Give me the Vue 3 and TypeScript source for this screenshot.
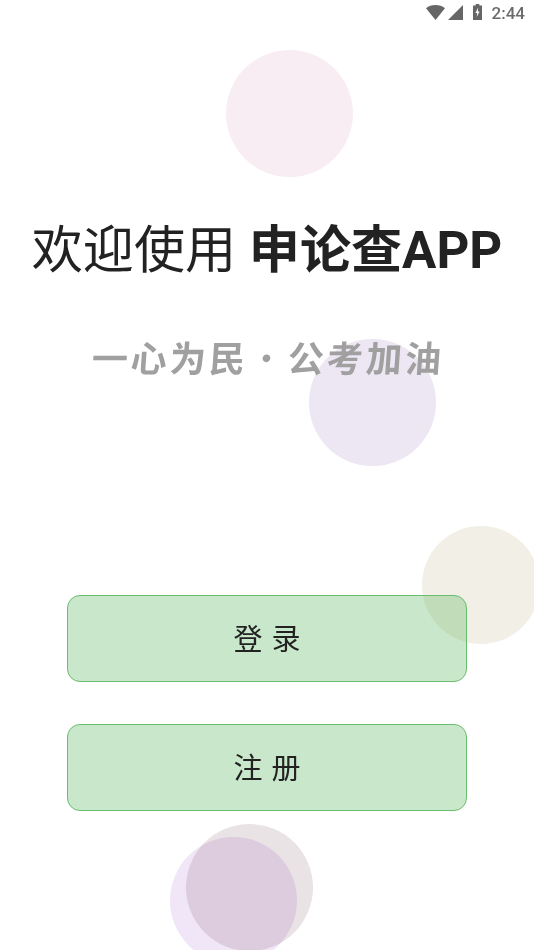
<script setup lang="ts">
interface Bubble { cls: string }
const bubbles: Bubble[] = [
  { cls: 'pink' },
  { cls: 'lilac' },
  { cls: 'sand' },
  { cls: 'violet' },
  { cls: 'mauve' },
]
const actions: string[] = ['登录', '注册']
</script>

<template>
  <div class="screen">
    <span v-for="b in bubbles" :key="b.cls" class="bubble" :class="b.cls"></span>

    <header class="status">
      <svg class="wifi" viewBox="0 0 19 15" width="19" height="15" aria-hidden="true">
        <path d="M0 3.2C2.6 1.1 5.9 0 9.5 0s6.9 1.1 9.5 3.2L9.5 15z" fill="#666" />
      </svg>
      <svg class="signal" viewBox="0 0 15 15" width="15" height="15" aria-hidden="true">
        <path d="M15 0v15H0z" fill="#666" />
      </svg>
      <svg class="battery" viewBox="0 0 9 16" width="9" height="16" aria-hidden="true">
        <path d="M2.7 0h3.6v1.6H9V16H0V1.6h2.7z" fill="#666" />
        <path d="M5.2 3.5 2.4 9h1.8l-.5 4 2.9-5.6H4.8z" fill="#fff" />
      </svg>
      <span class="time">2:44</span>
    </header>

    <main class="content">
      <h1 class="title">欢迎使用 <strong>申论查APP</strong></h1>
      <p class="slogan">一心为民 <span class="dot">·</span> 公考加油</p>
      <div class="actions">
        <button v-for="a in actions" :key="a" class="action" type="button">{{ a }}</button>
      </div>
    </main>
  </div>
</template>

<style scoped>
.screen {
  position: relative;
  width: 534px;
  height: 950px;
  overflow: hidden;
  background: #fff;
  font-family: "Noto Sans CJK SC", "Roboto", sans-serif;
}
.bubble {
  position: absolute;
  width: 127px;
  height: 127px;
  border-radius: 50%;
}
.pink { left: 226px; top: 50px; background: #f8edf3; }
.lilac { left: 309px; top: 339px; background: #ede6f3; }
.sand { left: 422px; top: 526px; width: 118px; height: 118px; background: #f2efe7; }
.violet { left: 170px; top: 837px; background: #f1e6f8; }
.mauve { left: 186px; top: 824px; background: #e9e3e5; mix-blend-mode: multiply; }

.status {
  position: relative;
  height: 22px;
  padding: 5px 9px 0 0;
  display: flex;
  align-items: flex-start;
  justify-content: flex-end;
}
.wifi { margin-right: 3px; }
.signal { margin-right: 10px; }
.battery { margin: -1px 10px 0 0; }
.time {
  font-family: "Roboto", sans-serif;
  font-size: 17px;
  line-height: 17px;
  font-weight: 500;
  color: #6b6b6b;
}

.content {
  position: relative;
  display: flex;
  flex-direction: column;
  align-items: center;
}
.title {
  margin: 189px 0 0;
  font-size: 51.1px;
  line-height: 70px;
  font-weight: 400;
  color: #222;
  white-space: nowrap;
  font-family: "Roboto", "Noto Sans CJK SC", sans-serif;
}
.title strong { font-weight: 700; }
.slogan {
  margin: 47px 0 0;
  padding-left: 2px;
  font-size: 36px;
  line-height: 46px;
  font-weight: 700;
  letter-spacing: 3.1px;
  word-spacing: -11px;
  color: #a0a0a0;
  white-space: nowrap;
  transform: skewX(-4deg);
}
.dot { font-weight: 400; }
.actions {
  margin-top: 216px;
  display: flex;
  flex-direction: column;
  gap: 42px;
}
.action {
  width: 400px;
  height: 87px;
  box-sizing: border-box;
  border: 1.3px solid #6abd6e;
  border-radius: 13px;
  background: rgba(76, 175, 80, 0.3);
  color: #222;
  font-family: inherit;
  font-size: 29px;
  letter-spacing: 9px;
  padding: 0 0 4px 9px;
}
</style>

<style>
html, body { margin: 0; background: #fff; }
</style>
